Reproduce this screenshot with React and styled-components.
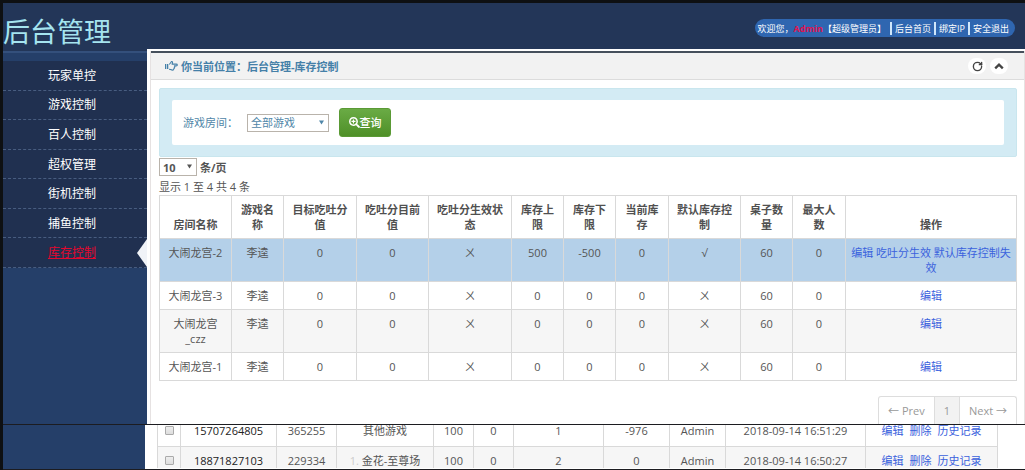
import React, { useState } from "react";
import styled, { createGlobalStyle, css } from "styled-components";
import { FaSearchPlus } from "react-icons/fa";
import { RotateCw } from "lucide-react";

const menu = [
  "玩家单控",
  "游戏控制",
  "百人控制",
  "超权管理",
  "街机控制",
  "捕鱼控制",
  "库存控制",
];

const stockColumns = [
  { title: "房间名称", width: 72 },
  { title: "游戏名称", width: 52 },
  { title: "目标吃吐分值", width: 73 },
  { title: "吃吐分目前值", width: 72 },
  { title: "吃吐分生效状态", width: 83 },
  { title: "库存上限", width: 52 },
  { title: "库存下限", width: 52 },
  { title: "当前库存", width: 53 },
  { title: "默认库存控制", width: 72 },
  { title: "桌子数量", width: 52 },
  { title: "最大人数", width: 53 },
  { title: "操作" },
];

const stockRows = [
  {
    cells: ["大闹龙宫-2", "李逵", "0", "0", "ㄨ", "500", "-500", "0", "√", "60", "0"],
    actions: ["编辑", "吃吐分生效", "默认库存控制失效"],
    selected: true,
  },
  {
    cells: ["大闹龙宫-3", "李逵", "0", "0", "ㄨ", "0", "0", "0", "ㄨ", "60", "0"],
    actions: ["编辑"],
  },
  {
    cells: ["大闹龙宫_czz", "李逵", "0", "0", "ㄨ", "0", "0", "0", "ㄨ", "60", "0"],
    actions: ["编辑"],
    striped: true,
  },
  {
    cells: ["大闹龙宫-1", "李逵", "0", "0", "ㄨ", "0", "0", "0", "ㄨ", "60", "0"],
    actions: ["编辑"],
  },
];

const recordWidths = [23, 96, 60, 97, 40, 40, 90, 66, 56, 140];

const recordRows = [
  {
    cells: ["15707264805", "365255", "其他游戏", "100", "0", "1", "-976", "Admin", "2018-09-14 16:51:29"],
  },
  {
    cells: ["18871827103", "229334", "金花-至尊场", "100", "0", "2", "0", "Admin", "2018-09-14 16:50:27"],
    mark: "1.",
  },
];

function App() {
  const [active, setActive] = useState("库存控制");

  return (
    <Page>
      <GlobalStyle />
      <Header>
        <Brand>后台管理</Brand>
        <UserBar>
          <Welcome>
            欢迎您，<b>Admin</b>【超级管理员】
          </Welcome>
          <a href="#home">后台首页</a>
          <a href="#ip">绑定IP</a>
          <a href="#logout">安全退出</a>
        </UserBar>
      </Header>
      <Body>
        <Sidebar>
          <Menu>
            {menu.map((item) => (
              <MenuItem key={item} $active={item === active}>
                <a href="#menu" onClick={() => setActive(item)}>
                  {item}
                </a>
              </MenuItem>
            ))}
          </Menu>
        </Sidebar>
        <Main>
          <Panel>
            <PanelHead>
              <h1>
                <HandIcon />
                你当前位置：后台管理-库存控制
              </h1>
              <RoundButton aria-label="刷新">
                <RotateCw size={11} strokeWidth={3} />
              </RoundButton>
              <RoundButton aria-label="收起">
                <ChevronIcon />
              </RoundButton>
            </PanelHead>
            <Content>
              <Filter>
                <FilterForm onSubmit={(e) => e.preventDefault()}>
                  <label htmlFor="room">游戏房间：</label>
                  <SelectWrap $width={82}>
                    <select id="room">
                      <option>全部游戏</option>
                    </select>
                    <Caret />
                  </SelectWrap>
                  <SearchButton type="submit">
                    <FaSearchPlus size={11} />
                    查询
                  </SearchButton>
                </FilterForm>
              </Filter>
              <PageSize>
                <SelectWrap $width={38} $bold>
                  <select id="size">
                    <option>10</option>
                  </select>
                  <Caret />
                </SelectWrap>
                <label htmlFor="size">条/页</label>
              </PageSize>
              <Info>显示 1 至 4 共 4 条</Info>
              <Table>
                <colgroup>
                  {stockColumns.map((col) => (
                    <col key={col.title} width={col.width} />
                  ))}
                </colgroup>
                <thead>
                  <tr>
                    {stockColumns.map((col) => (
                      <th key={col.title}>{col.title}</th>
                    ))}
                  </tr>
                </thead>
                <tbody>
                  {stockRows.map((row) => (
                    <Row key={row.cells[0]} $selected={row.selected} $striped={row.striped}>
                      {row.cells.map((cell, i) => (
                        <td key={i}>{cell}</td>
                      ))}
                      <td>
                        {row.actions.map((action, i) => (
                          <React.Fragment key={action}>
                            {i > 0 && " "}
                            <a href="#edit">{action}</a>
                          </React.Fragment>
                        ))}
                      </td>
                    </Row>
                  ))}
                </tbody>
              </Table>
              <Pager>
                <a href="#prev">← Prev</a>
                <PageNumber href="#1">1</PageNumber>
                <a href="#next">Next →</a>
              </Pager>
            </Content>
          </Panel>
        </Main>
      </Body>
      <Records>
        <RecordsSide />
        <RecordsPanel>
          <RecordTable>
            <colgroup>
              {recordWidths.map((width, i) => (
                <col key={i} width={width} />
              ))}
              <col />
            </colgroup>
            <tbody>
              {recordRows.map((row, i) => (
                <Row key={row.cells[0]} $striped={i % 2 === 1}>
                  <td>
                    <Tick type="checkbox" aria-label={row.cells[0]} />
                  </td>
                  {row.cells.map((cell, j) => (
                    <td key={j}>
                      {j === 2 && row.mark && <Mark>{row.mark} </Mark>}
                      {cell}
                    </td>
                  ))}
                  <td>
                    <Actions>
                      <a href="#edit">编辑</a>
                      <a href="#delete">删除</a>
                      <a href="#history">历史记录</a>
                    </Actions>
                  </td>
                </Row>
              ))}
            </tbody>
          </RecordTable>
        </RecordsPanel>
      </Records>
    </Page>
  );
}

export default App;

function Caret() {
  return (
    <CaretIcon viewBox="0 0 6 6" aria-hidden="true">
      <path d="M0 0.5h6L3 5.5z" fill="currentColor" />
    </CaretIcon>
  );
}

function HandIcon() {
  return (
    <svg viewBox="0 0 13 12" width="13" height="12" aria-hidden="true">
      <path d="M0 4h1v5H0zM1.7 4h1.6v5H1.7z" fill="currentColor" />
      <path
        d="M4 4.2c1.2 0 1.8-2.2 2.6-2.6.9-.3 1.2.6.8 1.5l-.4 1h4.2c1.5 0 1.5 1.8 0 1.8H9.4c.6.5.5 1.4-.2 1.6.4.6.1 1.3-.5 1.4.1.8-.4 1.2-1.1 1.2-1.6 0-2.4-.9-3.6-.9"
        fill="none"
        stroke="currentColor"
        strokeWidth="1.1"
        strokeLinejoin="round"
      />
    </svg>
  );
}

function ChevronIcon() {
  return (
    <svg viewBox="0 0 10 8" width="10" height="8" aria-hidden="true">
      <path d="M1.2 6.4L5 2.6l3.8 3.8" fill="none" stroke="currentColor" strokeWidth="2.3" />
    </svg>
  );
}

const GlobalStyle = createGlobalStyle`
  * {
    box-sizing: border-box;
  }

  body {
    margin: 0;
    font-family: "Open Sans", "Noto Sans CJK SC", sans-serif;
    font-size: 11px;
    line-height: 15px;
    color: #555;
  }

  a {
    text-decoration: none;
  }

  button,
  select {
    font: inherit;
  }
`;

const Page = styled.div`
  display: flex;
  flex-direction: column;
  min-height: 100vh;
  border-top: 3px solid #0e1012;
  border-left: 3px solid #0e1012;
  background: #253f69;
`;

const Header = styled.header`
  display: flex;
  align-items: center;
  justify-content: space-between;
  height: 46px;
  padding-right: 10px;
  background: #233658;
`;

const Brand = styled.div`
  padding-top: 12px;
  font-size: 27px;
  line-height: 34px;
  color: #a5e4ef;
`;

const UserBar = styled.nav`
  display: flex;
  align-items: center;
  height: 18px;
  margin-top: 4px;
  padding: 0 3px;
  border-radius: 9px;
  background: #2f66b0;
  font-size: 9px;
  line-height: 13px;
  color: #fff;

  a {
    padding: 0 3px;
    border-left: 2px solid #cfe6fa;
    color: #fff;
  }
`;

const Welcome = styled.span`
  padding-right: 4px;

  b {
    color: #e0124f;
  }
`;

const Body = styled.div`
  display: flex;
`;

const Sidebar = styled.aside`
  flex: 0 0 144px;
  padding-top: 12px;
  background: linear-gradient(#233658 2px, #34507c 2px, #34507c 4px, #253f69 4px);
`;

const Menu = styled.ul`
  display: flex;
  flex-direction: column;
  height: 207px;
  margin: 0;
  padding: 0;
  list-style: none;
  background: #203050;
`;

const MenuItem = styled.li`
  position: relative;
  display: flex;
  flex: 1;
  align-items: center;
  justify-content: center;
  padding-right: 6px;
  border-bottom: 1px dashed #485d80;
  font-size: 12px;

  a {
    color: #fff;
  }

  ${(props) =>
    props.$active &&
    css`
      a {
        color: #e6062e;
        text-decoration: underline;
      }

      &::after {
        content: "";
        position: absolute;
        top: 1px;
        right: 0;
        border: solid transparent;
        border-width: 14px 10px 14px 0;
        border-right-color: #f0f3f8;
      }
    `}
`;

const Main = styled.main`
  flex: 1;
  min-width: 0;
  padding: 2px 0 0 3px;
  background: #fff;
`;

const Panel = styled.section`
  border: solid #e6e2e2;
  border-width: 0 1px;
`;

const PanelHead = styled.div`
  display: flex;
  align-items: center;
  gap: 4px;
  height: 29px;
  padding: 0 16px 0 14px;
  border-top: 2px solid #46505c;
  border-bottom: 1px solid #dcdcdc;
  background: #f2f2f2;

  h1 {
    display: flex;
    flex: 1;
    align-items: center;
    gap: 3px;
    margin: 0;
    font-size: 11px;
    font-weight: bold;
    color: #4580a8;
  }
`;

const RoundButton = styled.button`
  display: flex;
  align-items: center;
  justify-content: center;
  width: 18px;
  height: 16px;
  padding: 0;
  border: none;
  border-radius: 8px;
  background: #fff;
  color: #444;
`;

const Content = styled.div`
  padding: 8px 7px 0 8px;
`;

const Filter = styled.div`
  padding: 11px 12px;
  border: 1px solid #c9e6ee;
  border-radius: 2px;
  background: #d3ebf4;
`;

const FilterForm = styled.form`
  display: flex;
  align-items: center;
  height: 45px;
  padding: 0 11px;
  border-radius: 2px;
  background: #fff;
  color: #4f86a8;

  label {
    width: 64px;
    white-space: nowrap;
  }
`;

const SelectWrap = styled.span`
  position: relative;
  display: inline-flex;
  width: ${(props) => props.$width}px;
  height: 18px;

  select {
    width: 100%;
    padding: 0 3px;
    appearance: none;
    border: 1px solid #b9b3ab;
    border-radius: 0;
    background: #fff;
    color: inherit;
    line-height: 15px;
    font-weight: ${(props) => (props.$bold ? "bold" : "normal")};
  }
`;

const CaretIcon = styled.svg`
  position: absolute;
  top: 6px;
  right: 5px;
  width: 5px;
  height: 5px;
  pointer-events: none;
`;

const SearchButton = styled.button`
  display: flex;
  align-items: center;
  justify-content: center;
  width: 52px;
  height: 29px;
  margin-left: 10px;
  padding: 0;
  border: 1px solid #5a9a35;
  border-radius: 3px;
  background: linear-gradient(#6aab45, #4f9028);
  font-weight: 500;
  color: #fff;
`;

const PageSize = styled.div`
  display: flex;
  align-items: center;
  gap: 3px;
  padding-top: 1px;
  font-weight: bold;
  color: #555;
`;

const Info = styled.div`
  padding: 3px 0 1px;
`;

const Table = styled.table`
  width: 100%;
  table-layout: fixed;
  border-collapse: collapse;

  th,
  td {
    padding: 6px 5px;
    border: 1px solid #d9d9d9;
    text-align: center;
    vertical-align: top;
  }

  th {
    vertical-align: bottom;
    color: #505050;
  }

  a {
    color: #3b62dd;
  }
`;

const Row = styled.tr`
  background: ${(props) =>
    props.$selected ? "#b4d0e9" : props.$striped ? "#f6f6f6" : "#fff"};
`;

const Pager = styled.nav`
  display: flex;
  justify-content: flex-end;
  margin-top: 15px;

  a {
    height: 28px;
    padding: 6px 9px;
    border: 1px solid #ddd;
    border-width: 1px 1px 0 0;
    color: #999;
  }

  a:first-child {
    border-left-width: 1px;
    border-top-left-radius: 3px;
  }

  a:last-child {
    border-top-right-radius: 3px;
  }
`;

const PageNumber = styled.a`
  background: #f2f2f2;
`;

const Records = styled.section`
  display: flex;
  flex: 1;
  border: solid #1c1c20;
  border-width: 1px 0;
  overflow: hidden;
`;

const RecordsSide = styled.div`
  flex: 0 0 142px;
`;

const RecordsPanel = styled.div`
  flex: 1;
  min-width: 0;
  padding: 0 27px 0 12px;
  background: #fff;
`;

/* the list is scrolled, so the first row is cut at its text */
const RecordTable = styled(Table)`
  margin-top: -2px;

  tr:first-child td {
    padding-top: 0;
    padding-bottom: 8px;
    border-top: none;
  }

  tr:last-child td {
    padding-bottom: 0;
    border-bottom: none;
  }

  td:nth-child(2) {
    color: #222;
  }
`;

const Tick = styled.input`
  width: 9px;
  height: 9px;
  margin: 3px 0 0;
  appearance: none;
  border: 1px solid #aaa;
  border-radius: 1px;
  background: linear-gradient(#eee, #ddd);
  vertical-align: top;
`;

const Mark = styled.span`
  color: #ccc;
`;

const Actions = styled.div`
  display: flex;
  justify-content: center;
  gap: 6px;
`;
